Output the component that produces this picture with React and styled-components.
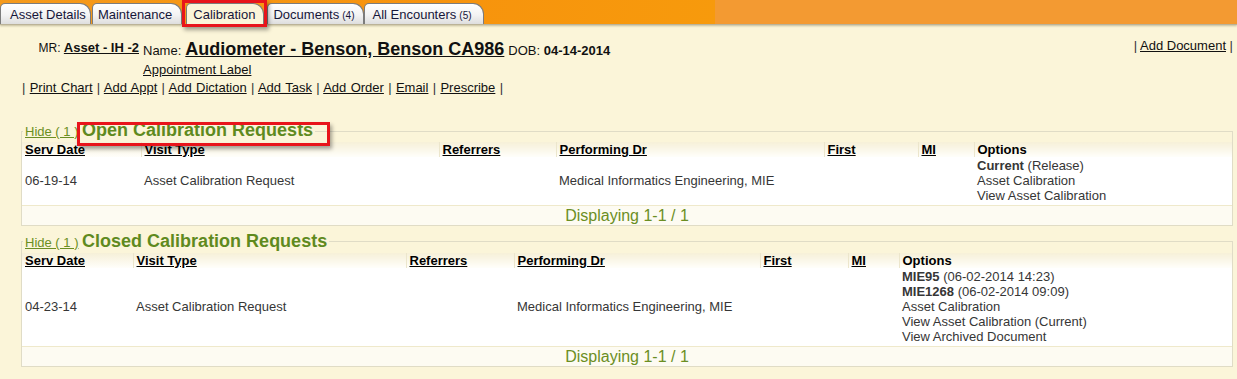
import React from 'react';
import styled, { createGlobalStyle } from 'styled-components';

/*
 * global
 */

const GlobalStyle = createGlobalStyle`
  html, body {
    margin: 0;
    padding: 0;
    background-color: #fbf5d9;
  }

  body {
    color: #111;
    font-family: "Liberation Sans", Arial, sans-serif;
    font-size: 13px;
  }
`;

/*
 * styled components
 */

const Page = styled.div`
  display: flex;
  flex-direction: column;
  min-height: 379px;
`;

const TabBar = styled.header`
  border-bottom: 1px solid #bbb398;
  box-shadow: 0 1px 2px rgba(90, 80, 40, 0.35);
  display: flex;
  flex-direction: row;
  height: 24px;
`;

const TabStrip = styled.nav`
  align-items: flex-end;
  background: linear-gradient(100deg, #f59a1c 0%, #f7930d 60%, #f79a0c 100%);
  display: flex;
  flex: 0 0 715px;
  flex-direction: row;
`;

const BarFill = styled.div`
  background-color: #f39a32;
  flex: 1 1 auto;
`;

const Annotated = styled.span`
  position: relative;

  &::after {
    border: 3px solid #e8141b;
    bottom: ${(props) => props.$bottom}px;
    box-shadow: 2px 3px 4px rgba(0, 0, 0, 0.35);
    content: '';
    left: ${(props) => props.$left}px;
    pointer-events: none;
    position: absolute;
    right: ${(props) => props.$right}px;
    top: ${(props) => props.$top}px;
  }
`;

const Tab = styled.div`
  align-items: center;
  background: ${(props) => (props.$active
    ? '#fbf5d9'
    : 'linear-gradient(180deg, #ffffff 0%, #f3f3f3 55%, #dedede 100%)')};
  border: 1px solid #7c7c7c;
  border-bottom: none;
  border-radius: 5px 11px 0 0;
  box-sizing: border-box;
  color: #16163a;
  display: flex;
  font-size: 13px;
  height: 21px;
  margin-left: ${(props) => props.$gap}px;
  padding: 0 ${(props) => props.$padRight}px 0 ${(props) => props.$padLeft}px;
  white-space: nowrap;
`;

const TabCount = styled.span`
  font-size: 10px;
  margin-left: 3px;
  margin-top: 2px;
`;

const Header = styled.section`
  display: flex;
  flex-direction: row;
  justify-content: space-between;
  padding: 13px 4px 0 0;
`;

const PatientBlock = styled.div`
  display: flex;
  flex-direction: row;
`;

const MrCell = styled.div`
  box-sizing: border-box;
  font-size: 12px;
  padding: 2px 4px 0 0;
  text-align: right;
  white-space: nowrap;
  width: 143px;
`;

const NameCell = styled.div`
  display: flex;
  flex-direction: column;
`;

const NameLine = styled.div`
  align-items: baseline;
  display: flex;
  flex-direction: row;
  gap: 4px;
  padding-top: 1px;
  white-space: nowrap;
`;

const Link = styled.a`
  color: #111;
  cursor: pointer;
  font-size: ${(props) => props.$size || 13}px;
  font-weight: ${(props) => (props.$bold ? 'bold' : 'normal')};
  text-decoration: underline;
`;

const Strong = styled.b`
  font-weight: bold;
`;

const LinkLine = styled.div`
  color: #333;
  line-height: 15px;
  padding: ${(props) => props.$pad || '0'};
  white-space: nowrap;
  word-spacing: ${(props) => props.$spread || 0}px;
`;

const Section = styled.fieldset`
  border: 1px solid #e0dcc6;
  margin: ${(props) => props.$top}px 4px 0 21px;
  min-width: 0;
  padding: 0;
`;

const Legend = styled.legend`
  line-height: 21px;
  margin-left: 1px;
  padding: 0 2px;
  white-space: nowrap;
`;

const HideLink = styled.a`
  color: #6b8e23;
  cursor: pointer;
  font-size: 13px;
  text-decoration: underline;
`;

const SectionTitle = styled.span`
  color: #5f8a1e;
  font-size: 18px;
  font-weight: bold;
`;

const Table = styled.table`
  border-collapse: collapse;
  table-layout: fixed;
  width: 100%;
`;

const HeadCell = styled.th`
  background: linear-gradient(180deg, #f6f0d8 0%, #fbf8ec 60%, #fffefa 100%);
  border-left: ${(props) => (props.$first ? 'none' : '1px solid #ece6cc')};
  color: #000;
  font-weight: bold;
  height: 15px;
  line-height: 15px;
  padding: 0 3px;
  text-align: left;
  text-decoration: ${(props) => (props.$plain ? 'none' : 'underline')};
  white-space: nowrap;
`;

const BodyCell = styled.td`
  background-color: #fff;
  color: #363636;
  line-height: 15.2px;
  padding: 1px 3px;
  vertical-align: middle;
  white-space: nowrap;
`;

const OptionLine = styled.div`
  line-height: 15.2px;
`;

const FootCell = styled.td`
  background-color: #fdfbf2;
  border-top: 1px solid #efe9cb;
  color: #6b8e23;
  font-size: 16px;
  height: 19px;
  line-height: 19px;
  padding: 0;
  text-align: center;
`;

/*
 * data
 */

const COLUMNS = ['Serv Date', 'Visit Type', 'Referrers', 'Performing Dr', 'First', 'MI', 'Options'];

const TABS = [
  { label: 'Asset Details', gap: 0, padLeft: 9, padRight: 4 },
  { label: 'Maintenance', gap: 1, padLeft: 5, padRight: 9 },
  { label: 'Calibration', gap: 4, padLeft: 6, padRight: 8, active: true },
  { label: 'Documents', count: '(4)', gap: 3, padLeft: 5, padRight: 9 },
  { label: 'All Encounters', count: '(5)', gap: 0, padLeft: 7, padRight: 11 },
];

const ACTIONS = ['Print Chart', 'Add Appt', 'Add Dictation', 'Add Task', 'Add Order', 'Email', 'Prescribe'];

const SECTIONS = [
  {
    title: 'Open Calibration Requests',
    marked: true,
    top: 25,
    widths: [119, 298, 117, 268, 94, 56],
    row: {
      date: '06-19-14',
      visit: 'Asset Calibration Request',
      doctor: 'Medical Informatics Engineering, MIE',
      options: [
        { bold: 'Current', rest: ' (Release)' },
        { rest: 'Asset Calibration' },
        { rest: 'View Asset Calibration' },
      ],
    },
  },
  {
    title: 'Closed Calibration Requests',
    top: 5,
    widths: [111, 273, 108, 246, 88, 51],
    row: {
      date: '04-23-14',
      visit: 'Asset Calibration Request',
      doctor: 'Medical Informatics Engineering, MIE',
      options: [
        { bold: 'MIE95', rest: ' (06-02-2014 14:23)' },
        { bold: 'MIE1268', rest: ' (06-02-2014 09:09)' },
        { rest: 'Asset Calibration' },
        { rest: 'View Asset Calibration (Current)' },
        { rest: 'View Archived Document' },
      ],
    },
  },
];

/*
 * components
 */

const RequestSection = ({ section }) => {

  const { row } = section;
  const title = <SectionTitle>{section.title}</SectionTitle>;

  return (
    <Section $top={section.top}>
      <Legend>
        <HideLink>Hide ( 1 )</HideLink>
        {' '}
        {
          section.marked
            ? <Annotated $top={-2} $bottom={-7} $left={-5} $right={-17}>{title}</Annotated>
            : title
        }
      </Legend>
      <Table>
        <colgroup>
          {section.widths.map((width, index) => <col key={COLUMNS[index]} style={{ width }} />)}
          <col />
        </colgroup>
        <thead>
          <tr>
            {
              COLUMNS.map((column, index) => (
                <HeadCell key={column} $first={index === 0} $plain={column === 'Options'}>
                  {column}
                </HeadCell>
              ))
            }
          </tr>
        </thead>
        <tbody>
          <tr>
            <BodyCell>{row.date}</BodyCell>
            <BodyCell>{row.visit}</BodyCell>
            <BodyCell />
            <BodyCell>{row.doctor}</BodyCell>
            <BodyCell />
            <BodyCell />
            <BodyCell>
              {
                row.options.map((option) => (
                  <OptionLine key={`${option.bold || ''}${option.rest}`}>
                    {option.bold && <Strong>{option.bold}</Strong>}
                    {option.rest}
                  </OptionLine>
                ))
              }
            </BodyCell>
          </tr>
          <tr>
            <FootCell colSpan={7}>Displaying 1-1 / 1</FootCell>
          </tr>
        </tbody>
      </Table>
    </Section>
  );
};

const App = () => (
  <Page>
    <GlobalStyle />
    <TabBar>
      <TabStrip>
        {
          TABS.map((tab) => {
            const content = (
              <Tab
                  key={tab.label}
                  $active={tab.active}
                  $gap={tab.gap}
                  $padLeft={tab.padLeft}
                  $padRight={tab.padRight}>
                {tab.label}
                {tab.count && <TabCount>{tab.count}</TabCount>}
              </Tab>
            );
            return tab.active
              ? (
                <Annotated key={tab.label} $top={-3} $bottom={-3} $left={0} $right={-3}>
                  {content}
                </Annotated>
              )
              : content;
          })
        }
      </TabStrip>
      <BarFill />
    </TabBar>
    <Header>
      <PatientBlock>
        <MrCell>
          MR:
          {' '}
          <Link $bold>Asset - IH -2</Link>
        </MrCell>
        <NameCell>
          <NameLine>
            <span>Name:</span>
            <Link $bold $size={18}>Audiometer - Benson, Benson CA986</Link>
            <span>
              DOB:
              {' '}
              <Strong>04-14-2014</Strong>
            </span>
          </NameLine>
          <LinkLine $pad="2px 0 0 0">
            <Link>Appointment Label</Link>
          </LinkLine>
        </NameCell>
      </PatientBlock>
      <LinkLine>
        {'| '}
        <Link>Add Document</Link>
        {' |'}
      </LinkLine>
    </Header>
    <LinkLine $pad="3px 0 0 22px" $spread={0.7}>
      {'| '}
      {
        ACTIONS.map((action) => (
          <React.Fragment key={action}>
            <Link>{action}</Link>
            {' | '}
          </React.Fragment>
        ))
      }
    </LinkLine>
    {SECTIONS.map((section) => <RequestSection key={section.title} section={section} />)}
  </Page>
);

export default App;
